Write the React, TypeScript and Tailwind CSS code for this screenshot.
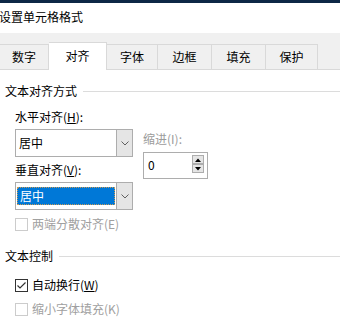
import React from 'react';

const FONT = { fontFamily: '"Noto Sans CJK SC", "Noto Sans", sans-serif' };

const TABS = [
  { label: '数字', w: 'w-[49px]' },
  { label: '对齐', w: 'w-[58px]', active: true },
  { label: '字体', w: 'w-[51px]' },
  { label: '边框', w: 'w-[54px]' },
  { label: '填充', w: 'w-[54px]' },
  { label: '保护', w: 'w-[52px]' },
];

export default function App() {
  return (
    <div
      className="w-[340px] h-[320px] overflow-hidden bg-white text-black text-[12px] leading-[16px]"
      style={FONT}
    >
      {/* window top edge */}
      <div className="h-[3px] bg-[#0d2846]" />

      {/* title */}
      <div className="h-[30px] flex items-center pb-[2px] -ml-[1px]">设置单元格格式</div>

      {/* tabs */}
      <div className="h-[37px] bg-[#f0f0f0] border-b border-[#d9d9d9] flex items-end">
        {TABS.map((t) =>
          t.active ? (
            <div
              key={t.label}
              className={`${t.w} h-[28px] -mb-px bg-white border-t border-r border-[#d9d9d9] flex items-center justify-center pb-[1px]`}
            >
              {t.label}
            </div>
          ) : (
            <div
              key={t.label}
              className={`${t.w} h-[25px] border-t border-r border-[#d9d9d9] flex items-center justify-center`}
            >
              {t.label}
            </div>
          )
        )}
      </div>

      {/* content */}
      <div className="pl-[5px] pt-[13px]">
        <SectionTitle label="文本对齐方式" />

        <div className="pl-[10px]">
          <div className="mt-[10px]">
            水平对齐(<span className="underline">H</span>):
          </div>

          <div className="flex">
            <div className="w-[118px]">
              <div className="mt-[4px]">
                <Combo value="居中" />
              </div>
              <div className="mt-[5px]">
                垂直对齐(<span className="underline">V</span>):
              </div>
              <div className="mt-[4px]">
                <Combo value="居中" focused />
              </div>
            </div>

            <div className="ml-[10px]">
              <div className="mt-[6px] text-[#9b9b9b]">缩进(I):</div>
              <div className="mt-[5px] w-[65px] h-[27px] border border-[#adadad] bg-white flex items-start justify-between">
                <span className="pl-[4px] pt-[4px]">0</span>
                <div className="mt-[2px] mr-[3px] flex flex-col">
                  <SpinButton up />
                  <SpinButton />
                </div>
              </div>
            </div>
          </div>

          <div className="mt-[6px]">
            <CheckRow label="两端分散对齐(E)" disabled />
          </div>
        </div>

        <div className="mt-[16px]">
          <SectionTitle label="文本控制" />
        </div>

        <div className="pl-[10px]">
          <div className="mt-[13px]">
            <CheckRow
              checked
              label={
                <>
                  自动换行(<span className="underline">W</span>)
                </>
              }
            />
          </div>
          <div className="mt-[8px]">
            <CheckRow label="缩小字体填充(K)" disabled />
          </div>
        </div>
      </div>
    </div>
  );
}

// ─── Subcomponents ───────────────────────────────────────────────────────────

function SectionTitle({ label }: { label: string }) {
  return (
    <div className="flex items-center">
      <span>{label}</span>
      <div className="flex-1 h-px bg-[#dcdcdc] ml-[6px]" />
    </div>
  );
}

function Combo({ value, focused }: { value: string; focused?: boolean }) {
  return (
    <div className="h-[28px] border border-[#adadad] bg-white flex">
      {focused ? (
        <div className="flex-1 pl-[1px] pr-[1px] py-[4px] flex">
          <div className="flex-1 bg-[#0078d7] text-white border border-dotted border-[#c99a55] flex items-center pl-[2px]">
            {value}
          </div>
        </div>
      ) : (
        <div className="flex-1 flex items-center pl-[3px]">{value}</div>
      )}
      <div className="w-[16px] bg-[#e5e5e5] border-l border-[#adadad] flex items-center justify-center">
        <svg width="8" height="5" viewBox="0 0 8 5">
          <polyline points="0.5,0.5 4,4 7.5,0.5" fill="none" stroke="#606060" strokeWidth="1" />
        </svg>
      </div>
    </div>
  );
}

function SpinButton({ up }: { up?: boolean }) {
  return (
    <div className="w-[12px] h-[9px] bg-[#e5e5e5] border border-[#adadad] flex items-center justify-center">
      <svg width="6" height="4" viewBox="0 0 6 4">
        {up ? <polygon points="0,4 6,4 3,0.5" fill="#000" /> : <polygon points="0,0 6,0 3,3.5" fill="#000" />}
      </svg>
    </div>
  );
}

function CheckRow({
  label,
  checked,
  disabled,
}: {
  label: React.ReactNode;
  checked?: boolean;
  disabled?: boolean;
}) {
  return (
    <div className={`h-[16px] flex items-center ${disabled ? 'text-[#a0a0a0]' : ''}`}>
      <div
        className={`w-[13px] h-[13px] border bg-white flex items-center justify-center ${
          disabled ? 'border-[#cccccc]' : 'border-[#333333]'
        }`}
      >
        {checked && (
          <svg width="11" height="11" viewBox="0 0 11 11">
            <polyline points="1.5,5.5 4,8 9.5,2.5" fill="none" stroke="#333" strokeWidth="1.2" />
          </svg>
        )}
      </div>
      <span className="ml-[4px]">{label}</span>
    </div>
  );
}
